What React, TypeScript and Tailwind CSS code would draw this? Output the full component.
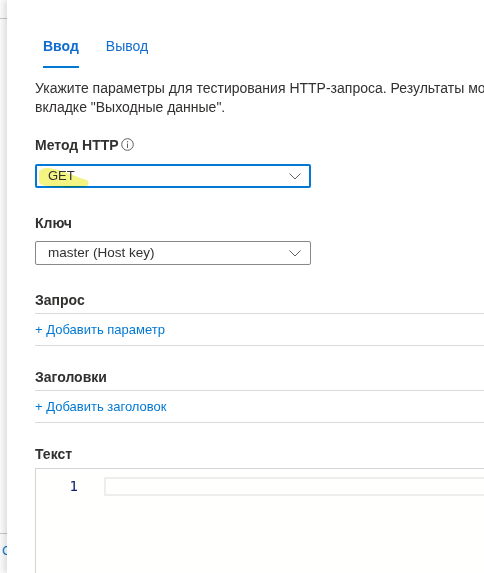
import React from "react";

const Chevron = () => (
  <svg width="12" height="7" viewBox="0 0 12 7" className="shrink-0">
    <polyline points="0.5,0.5 6,6 11.5,0.5" fill="none" stroke="#605e5c" strokeWidth="1" />
  </svg>
);

const InfoIcon = () => (
  <svg width="13" height="13" viewBox="0 0 13 13" className="ml-[2px] mt-[3px]">
    <circle cx="6.5" cy="6.5" r="5.8" fill="none" stroke="#605e5c" strokeWidth="1" />
    <line x1="6.5" y1="5.5" x2="6.5" y2="10" stroke="#605e5c" strokeWidth="1" />
    <circle cx="6.5" cy="3.7" r="0.7" fill="#605e5c" />
  </svg>
);

const Label = ({ children }: { children: React.ReactNode }) => (
  <div className="flex items-start h-[20px] text-[14px] leading-[20px] font-bold text-[#323130]">{children}</div>
);

export default function App() {
  return (
    <div
      className="w-[484px] h-[573px] overflow-hidden flex bg-white"
      style={{ fontFamily: "'Liberation Sans', Arial, sans-serif" }}
    >
      {/* background strip */}
      <div className="w-[7px] shrink-0 flex flex-col bg-[#fbfbfb] overflow-hidden">
        <div className="h-[18px]" />
        <div className="h-px bg-[#c8c8c8]" />
        <div className="flex-1" />
        <div className="h-px bg-[#c8c8c8]" />
        <div className="h-[39px] pl-[2px] pt-[8px] text-[13px] leading-[18px] text-[#0078d4] whitespace-nowrap">О</div>
      </div>

      {/* panel */}
      <div className="relative z-10 flex-1 min-w-0 bg-white shadow-[-3px_0_6px_rgba(0,0,0,0.12)] pl-[28px] flex flex-col">
        {/* tabs */}
        <div className="mt-[24px] flex h-[44px] text-[14px]">
          <div className="relative flex items-center px-[8px] font-bold text-[#0f6cd0]">
            Ввод
            <div className="absolute left-[8px] right-[8px] bottom-0 h-[2px] bg-[#0078d4]" />
          </div>
          <div className="flex items-center ml-[11px] px-[8px] text-[#0f6cd0]">Вывод</div>
        </div>

        {/* description */}
        <div className="mt-[11px] text-[14px] leading-[19px] text-[#323130] whitespace-nowrap">
          <div>Укажите параметры для тестирования HTTP-запроса. Результаты можно просмотреть на</div>
          <div>вкладке "Выходные данные".</div>
        </div>

        {/* method */}
        <div className="mt-[18px]">
          <Label>
            Метод HTTP
            <InfoIcon />
          </Label>
        </div>
        <div className="relative mt-[9px] w-[276px] h-[24px] border-2 border-[#0078d4] rounded-[2px] flex items-center justify-between pl-[11px] pr-[8px] text-[13px] text-[#323130]">
          <svg width="52" height="26" viewBox="0 0 52 26" className="absolute left-[2px] top-[-1px] mix-blend-multiply">
            <defs>
              <filter id="soft" x="-10%" y="-20%" width="120%" height="140%">
                <feGaussianBlur stdDeviation="0.7" />
              </filter>
            </defs>
            <path
              d="M7 3 C 20 3, 40 13, 46 14.5 A3.5 3.5 0 0 1 46 21.5 C 35 22.5, 20 22.5, 7 21 A 9 9 0 0 1 7 3 Z"
              fill="#f2f36e"
              opacity="0.85"
              filter="url(#soft)"
            />
          </svg>
          <span className="relative">GET</span>
          <Chevron />
        </div>

        {/* key */}
        <div className="mt-[25px]">
          <Label>Ключ</Label>
        </div>
        <div className="mt-[8px] w-[276px] h-[24px] border border-[#8a8886] rounded-[2px] flex items-center justify-between pl-[12px] pr-[9px] text-[13.5px] text-[#323130]">
          <span>master (Host key)</span>
          <Chevron />
        </div>

        {/* query */}
        <div className="mt-[25px] pb-[3px]">
          <Label>Запрос</Label>
        </div>
        <div className="h-px bg-[#dadada]" />
        <div className="h-[31px] flex items-center text-[13px] text-[#0078d4]">+ Добавить параметр</div>
        <div className="h-px bg-[#dadada]" />

        {/* headers */}
        <div className="mt-[21px] pb-[3px]">
          <Label>Заголовки</Label>
        </div>
        <div className="h-px bg-[#dadada]" />
        <div className="h-[31px] flex items-center text-[13px] text-[#0078d4]">+ Добавить заголовок</div>
        <div className="h-px bg-[#dadada]" />

        {/* body */}
        <div className="mt-[21px]">
          <Label>Текст</Label>
        </div>
        <div className="mt-[4px] flex-1 border-t border-l border-[#d4d4d4] bg-[#fffffe] pt-[8px] flex">
          <div
            className="w-[42px] shrink-0 text-right text-[14px] leading-[19px] h-[19px] text-[#0b216f]"
            style={{ fontFamily: "'DejaVu Sans Mono', monospace" }}
          >
            1
          </div>
          <div className="ml-[26px] flex-1 h-[19px] border-2 border-r-0 border-[#eeeeee]" />
        </div>
      </div>
    </div>
  );
}
